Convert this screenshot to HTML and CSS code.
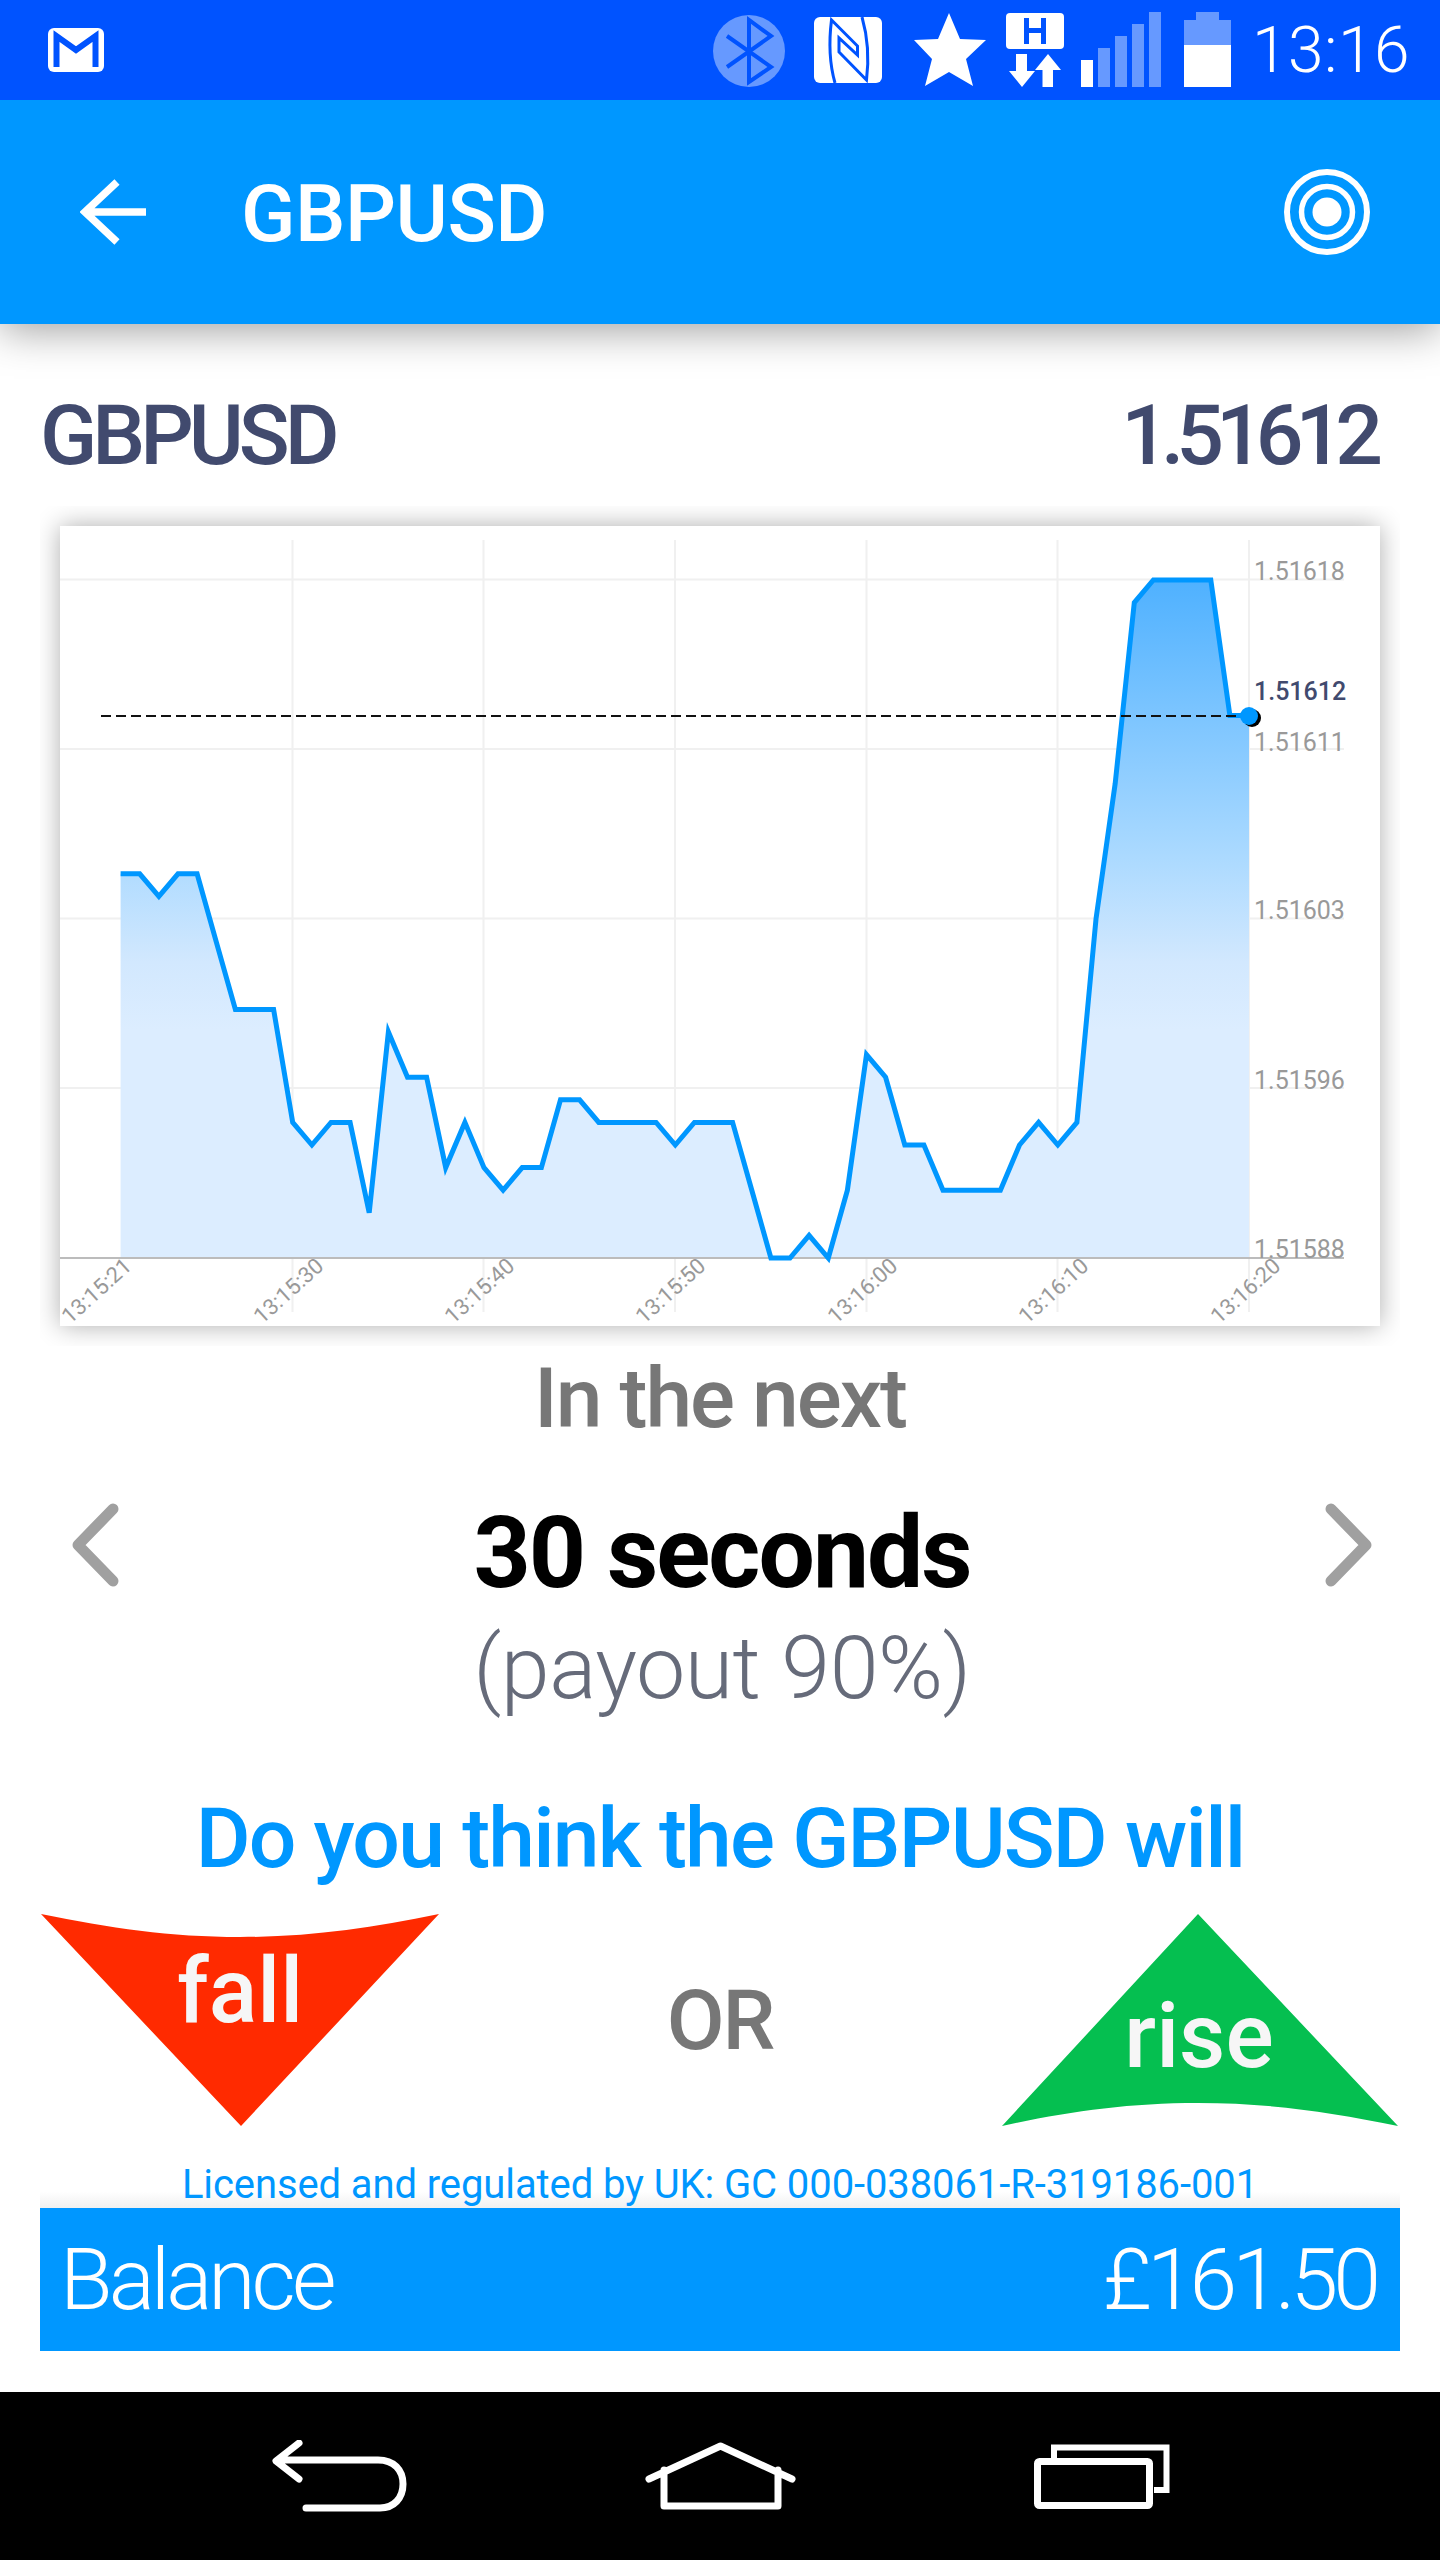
FILE: index.html
```html
<!DOCTYPE html>
<html lang="en">
<head>
    <meta charset="UTF-8">
    <meta name="viewport" content="width=device-width, initial-scale=1.0">
    <title>GBPUSD</title>
    <link rel="stylesheet" href="styles.css">
</head>
<body>
<div class="phone">
    <div class="status-bar">
        <svg class="gmail-icon" width="56" height="44" viewBox="48 28 56 44">
            <rect x="48" y="28" width="56" height="44" rx="6" fill="#fff"/>
            <path d="M56.500 67V36L76 50L95.500 36V67" fill="none" stroke="#0053ff" stroke-width="6"/>
        </svg>
        <svg class="status-icons" width="530" height="100" viewBox="712 0 530 100">
            <!-- bluetooth -->
            <circle cx="750" cy="51" r="36" fill="#6699ff"/>
            <path d="M728 36L772 67L750 82V20L772 36L728 67" fill="none" stroke="#0053ff" stroke-width="4"/>
            <!-- nfc -->
            <rect x="815" y="17" width="68" height="66" rx="6" fill="#fff"/>
            <path d="M836 83C830 62 830 40 832.500 20L858.500 46V55L840 38V52L867.500 80C870 60 869 38 863 17" fill="none" stroke="#0053ff" stroke-width="3"/>
            <!-- star -->
            <polygon points="950,13 961,39 987,40 967,59 974,86 950,72 926,86 933,59 915,40 939,39" fill="#fff"/>
            <!-- network type -->
            <rect x="1007" y="13" width="58" height="36" rx="4" fill="#fff"/>
            <path d="M1025 18V44H1030V33H1042V44H1047V18H1042V28H1030V18Z" fill="#0053ff"/>
            <polygon points="1017,54 1028,54 1028,71 1036,71 1023,87 1010,71 1017,71" fill="#fff"/>
            <polygon points="1043.500,87 1054,87 1054,70 1062,70 1049,54 1036,70 1043.500,70" fill="#fff"/>
            <!-- signal -->
            <rect x="1082" y="60" width="12" height="27" fill="#fff"/>
            <rect x="1099" y="48" width="12" height="39" fill="#6699ff"/>
            <rect x="1116" y="36" width="12" height="51" fill="#6699ff"/>
            <rect x="1133" y="24" width="12" height="63" fill="#6699ff"/>
            <rect x="1150" y="12" width="12" height="75" fill="#6699ff"/>
            <!-- battery -->
            <path d="M1197 12H1220V20H1232V45H1185V20H1197Z" fill="#6699ff"/>
            <rect x="1185" y="45" width="47" height="42" fill="#fff"/>
        </svg>
        <span class="clock">13:16</span>
    </div>

    <div class="app-bar">
        <svg class="back-arrow" width="66" height="66" viewBox="0 0 66 66">
            <path d="M37 3L5 33L37 63M5 33H66" fill="none" stroke="#fff" stroke-width="7.500"/>
        </svg>
        <span class="app-title">GBPUSD</span>
        <svg class="target-icon" width="86" height="86" viewBox="0 0 86 86">
            <circle cx="43" cy="43" r="40" fill="none" stroke="#fff" stroke-width="6"/>
            <circle cx="43" cy="43" r="25.500" fill="none" stroke="#fff" stroke-width="5.500"/>
            <circle cx="43" cy="43" r="14.500" fill="#fff"/>
        </svg>
    </div>

    <div class="content">
        <div class="quote-row">
            <span class="quote-name">GBPUSD</span>
            <span class="quote-price">1.51612</span>
        </div>

        <div class="chart-wrap">
            <div class="chart-card">
                <svg class="chart" width="1320" height="800" viewBox="60 526 1320 800">
                    <defs>
                        <linearGradient id="area-fill" gradientUnits="userSpaceOnUse" x1="0" y1="580" x2="0" y2="1030">
                            <stop offset="0" stop-color="#4fb1ff"/>
                            <stop offset="0.62" stop-color="#acdaff"/>
                            <stop offset="0.85" stop-color="#d2e8fe"/>
                            <stop offset="1" stop-color="#dcedff"/>
                        </linearGradient>
                    </defs>
                    <g class="grid-lines">
                        <path d="M60 579.500H1344M60 749H1344M60 918.500H1344M60 1088H1344"/>
                        <path d="M292.500 540V1312M483.500 540V1312M675 540V1312M866.500 540V1312M1057.500 540V1312M1249 540V1312"/>
                    </g>
                    <polygon id="price-area" fill="url(#area-fill)"/>
                    <path class="axis-line" d="M60 1258H1344"/>
                    <polyline id="price-line" class="price-line"/>
                    <path class="price-dash" d="M101 716H1249"/>
                    <circle cx="1252" cy="718" r="9" fill="#000"/>
                    <circle cx="1249" cy="716" r="9" fill="#0097ff"/>
                    <g class="y-labels">
                        <text x="1254" y="580">1.51618</text>
                        <text x="1254" y="751">1.51611</text>
                        <text x="1254" y="919">1.51603</text>
                        <text x="1254" y="1089">1.51596</text>
                        <text x="1254" y="1258">1.51588</text>
                    </g>
                    <text class="current-label" x="1254" y="700">1.51612</text>
                    <g class="x-labels">
                        <text transform="translate(133 1268) rotate(-42)">13:15:21</text>
                        <text transform="translate(325 1268) rotate(-42)">13:15:30</text>
                        <text transform="translate(516 1268) rotate(-42)">13:15:40</text>
                        <text transform="translate(707 1268) rotate(-42)">13:15:50</text>
                        <text transform="translate(899 1268) rotate(-42)">13:16:00</text>
                        <text transform="translate(1090 1268) rotate(-42)">13:16:10</text>
                        <text transform="translate(1282 1268) rotate(-42)">13:16:20</text>
                    </g>
                </svg>
            </div>
        </div>

        <div class="next-label">In the next</div>

        <div class="duration-row">
            <svg class="chevron" width="48" height="84" viewBox="0 0 48 84">
                <path d="M42 6L7 42L42 78" fill="none" stroke="#a0a0a0" stroke-width="11" stroke-linecap="round" stroke-linejoin="round"/>
            </svg>
            <div class="duration-text">
                <div class="duration-value">30 seconds</div>
                <div class="duration-payout">(payout 90%)</div>
            </div>
            <svg class="chevron" width="48" height="84" viewBox="0 0 48 84">
                <path d="M6 6L41 42L6 78" fill="none" stroke="#a0a0a0" stroke-width="11" stroke-linecap="round" stroke-linejoin="round"/>
            </svg>
        </div>

        <div class="question">Do you think the GBPUSD will</div>

        <div class="choices">
            <svg class="choice" width="400" height="212" viewBox="0 0 400 212">
                <path d="M1 0C70 14 130 23 200 23C270 23 330 14 399 0L201 212Z" fill="#ff2a00"/>
                <text x="200" y="108">fall</text>
            </svg>
            <span class="or-label">OR</span>
            <svg class="choice" width="400" height="212" viewBox="0 0 400 212">
                <path d="M198 0L398 212C330 198 270 189 198 189C126 189 66 198 2 212Z" fill="#05bf50"/>
                <text x="199" y="153">rise</text>
            </svg>
        </div>

        <div class="licence">Licensed and regulated by UK: GC 000-038061-R-319186-001</div>

        <div class="balance-bar">
            <span>Balance</span>
            <span class="balance-value">£161.50</span>
        </div>
    </div>

    <div class="nav-bar">
        <svg width="135" height="72" viewBox="0 0 135 72">
            <path d="M27 3L4 21L27 39M6 20H106C122 20 131 30 131 44C131 58 122 68 108 68H34" fill="none" stroke="#fff" stroke-width="7" stroke-linecap="round" stroke-linejoin="round"/>
        </svg>
        <svg width="151" height="68" viewBox="0 0 151 68">
            <path d="M4 37L75.500 4L147 37M19 28V64H133V28" fill="none" stroke="#fff" stroke-width="7" stroke-linecap="round" stroke-linejoin="round"/>
        </svg>
        <svg width="136" height="65" viewBox="0 0 136 65">
            <rect x="3.500" y="17.500" width="112" height="44" rx="2" fill="none" stroke="#fff" stroke-width="7"/>
            <path d="M20 14V3.500H132.500V46H120" fill="none" stroke="#fff" stroke-width="6"/>
        </svg>
    </div>
</div>
<script src="chart.js"></script>
</body>
</html>
```

FILE: styles.css
```css
body{
    margin: 0;
    font-family: Roboto, Arial, sans-serif;
    background-color: #fff;
}
.phone{
    width: 1440px;
    height: 2560px;
    display: flex;
    flex-direction: column;
    overflow: hidden;
}
.status-bar{
    position: relative;
    z-index: 1;
    height: 100px;
    flex: none;
    display: flex;
    align-items: center;
    padding: 0 30px 0 48px;
    background-color: #0053ff;
}
.status-icons{
    margin-left: auto;
}
.clock{
    margin-left: 11px;
    color: #fff;
    font-size: 64px;
    font-weight: 300;
    letter-spacing: 0.5px;
}
.app-bar{
    position: relative;
    height: 224px;
    flex: none;
    display: flex;
    align-items: center;
    padding: 0 70px 0 80px;
    background-color: #0097ff;
    box-shadow: 0 6px 40px 0 rgba(0,0,0,0.38);
}
.app-title{
    margin-left: 95px;
    padding-top: 3px;
    color: #fff;
    font-size: 80px;
    font-weight: 500;
    letter-spacing: -0.5px;
}
.target-icon{
    margin-left: auto;
}
.content{
    flex: 1;
    padding: 0 40px;
}
.quote-row{
    display: flex;
    justify-content: space-between;
    height: 100px;
    padding: 62px 25px 20px 0;
    line-height: 100px;
    color: #414a6e;
    font-size: 84px;
    font-weight: 500;
    letter-spacing: -5px;
}
.quote-price{
    letter-spacing: -8px;
}
.chart-wrap{
    height: 800px;
    padding: 20px;
    overflow: hidden;
}
.chart-card{
    height: 800px;
    background-color: #fff;
    box-shadow: 0 0 24px rgba(0,0,0,0.32);
}
.chart{
    display: block;
}
.grid-lines path{
    fill: none;
    stroke: #f0f0f0;
    stroke-width: 2;
}
.axis-line{
    fill: none;
    stroke: #bcbcbc;
    stroke-width: 2;
}
.price-line{
    fill: none;
    stroke: #0097ff;
    stroke-width: 5;
}
.price-dash{
    fill: none;
    stroke: #111;
    stroke-width: 2;
    stroke-dasharray: 10 5;
}
.y-labels text{
    fill: #999;
    font-size: 25px;
}
.current-label{
    fill: #414a6e;
    font-size: 25px;
    font-weight: 500;
}
.x-labels text{
    fill: #999;
    font-size: 22px;
    text-anchor: end;
}
.next-label{
    padding-top: 3px;
    line-height: 100px;
    text-align: center;
    color: #777;
    font-size: 84px;
    font-weight: 500;
    letter-spacing: -2px;
}
.duration-row{
    display: flex;
    justify-content: space-between;
    align-items: flex-start;
    padding: 49px 27px 0 31px;
}
.chevron{
    margin-top: 5px;
}
.duration-text{
    text-align: center;
}
.duration-value{
    line-height: 110px;
    color: #000;
    font-size: 100px;
    font-weight: 700;
    letter-spacing: -2px;
}
.duration-payout{
    line-height: 120px;
    color: #666b7a;
    font-size: 88px;
    font-weight: 300;
    letter-spacing: -0.5px;
}
.question{
    margin-top: 61px;
    line-height: 100px;
    text-align: center;
    color: #0097ff;
    font-size: 84px;
    font-weight: 500;
    letter-spacing: -1.8px;
}
.choices{
    display: flex;
    justify-content: space-between;
    align-items: center;
    margin-top: 25px;
    height: 212px;
}
.choice text{
    fill: #f6f6f6;
    font-size: 90px;
    font-weight: 500;
    text-anchor: middle;
}
.or-label{
    color: #777;
    font-size: 84px;
    font-weight: 500;
    letter-spacing: -2px;
}
.licence{
    height: 48px;
    padding-top: 34px;
    line-height: 50px;
    text-align: center;
    color: #0097ff;
    font-size: 40px;
    letter-spacing: -0.1px;
    background: linear-gradient(#fff 80%, #f0f0f0);
}
.balance-bar{
    display: flex;
    justify-content: space-between;
    align-items: center;
    height: 143px;
    padding: 0 24px 0 20px;
    color: #fff;
    font-size: 86px;
    font-weight: 300;
    letter-spacing: -4px;
    background-color: #0097ff;
}
.balance-value{
    letter-spacing: -5px;
}
.nav-bar{
    height: 168px;
    flex: none;
    display: flex;
    align-items: center;
    gap: 238px;
    padding-left: 272px;
    background-color: #000;
}
```

FILE: chart.js
```js
// price per second, in pips above 1.51000
let prices = [
    605, 605, 604, 605, 605, 602, 599, 599, 599, 594,
    593, 594, 594, 590, 598, 596, 596, 592, 594, 592,
    591, 592, 592, 595, 595, 594, 594, 594, 594, 593,
    594, 594, 594, 591, 588, 588, 589, 588, 591, 597,
    596, 593, 593, 591, 591, 591, 591, 593, 594, 593,
    594, 603, 609, 617, 618, 618, 618, 618, 612, 612
];

let points = [];
for(let i = 0; i < prices.length; i++){
    let x = 120.6 + 19.126 * i;
    let y = 1258 - 22.6 * (prices[i] - 588);
    points.push(x.toFixed(1) + "," + y.toFixed(1));
}

document.getElementById("price-line").setAttribute("points", points.join(" "));
document.getElementById("price-area").setAttribute("points", "120.6,1258 " + points.join(" ") + " 1249,1258");
```
